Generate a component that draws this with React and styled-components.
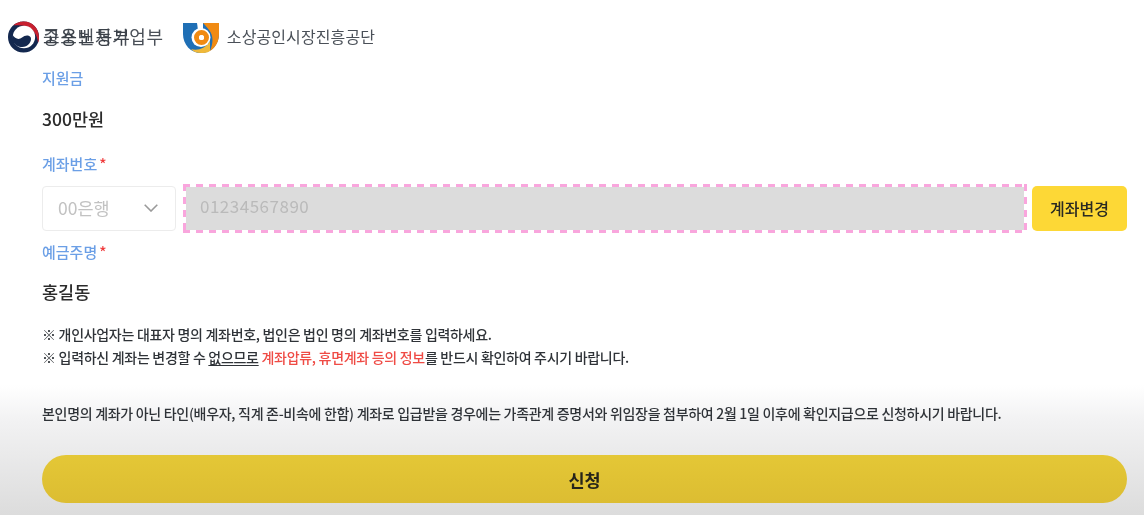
import styled, { createGlobalStyle } from 'styled-components'

const GlobalStyle = createGlobalStyle`
    html, body {
        margin: 0;
        padding: 0;
        background: #fff;
    }
    body {
        font-family: "Noto Sans CJK KR", "Noto Sans", sans-serif;
    }
`

const Page = styled.div`
    width: 1144px;
    height: 515px;
    overflow: hidden;
    box-sizing: border-box;
    background: linear-gradient(to bottom, #fff 0, #fff 385px, #f2f2f3 420px, #dcdcdc 515px);
    filter: blur(0.4px);
`

const Header = styled.header`
    display: flex;
    align-items: center;
    height: 32px;
    padding: 21px 0 0 7px;
`

const Brand = styled.div`
    display: flex;
    align-items: center;
    margin-right: 19px;
`

const BrandName = styled.span`
    position: relative;
    margin-left: ${(p) => p.$gap}px;
    padding-bottom: 2px;
    font-size: ${(p) => p.$size}px;
    letter-spacing: ${(p) => p.$spacing}px;
    color: #4a5058;
    white-space: nowrap;
`

const GhostName = styled.span`
    position: absolute;
    left: 0;
    top: 0;
    letter-spacing: 1px;
    color: #3a4048;
`

const Form = styled.main`
    display: flex;
    flex-direction: column;
    padding: 0 17px 0 42px;
`

const Label = styled.div`
    font-size: 15px;
    line-height: 20px;
    font-weight: 500;
    color: #6b9fe6;
    margin-top: ${(p) => p.$top}px;
`

const Star = styled.span`
    color: #f0393a;
    margin-left: 2px;
`

const Value = styled.div`
    font-size: 17.5px;
    line-height: 24px;
    font-weight: 500;
    color: #2b2b2b;
    margin-top: ${(p) => p.$top}px;
`

const AccountRow = styled.div`
    display: flex;
    align-items: center;
    height: 48px;
    margin-top: 10px;
`

const BankSelect = styled.div`
    display: flex;
    align-items: center;
    justify-content: space-between;
    box-sizing: border-box;
    width: 134px;
    height: 45px;
    padding: 0 17px 0 15px;
    border: 1px solid #ececec;
    border-radius: 4px;
    background: #fff;
    font-size: 17.5px;
    line-height: 24px;
    color: #c2c2c2;
`

const AccountInput = styled.div`
    display: flex;
    align-items: center;
    flex: 1;
    box-sizing: border-box;
    height: 49px;
    margin: 0 5px 0 7px;
    padding: 0 0 5px 17px;
    background:
        linear-gradient(to right, #f9a6dd 54%, transparent 54%) 0 0 / 13px 3px repeat-x,
        linear-gradient(to right, #f9a6dd 54%, transparent 54%) 0 100% / 13px 3px repeat-x,
        linear-gradient(to bottom, #f9a6dd 54%, transparent 54%) 0 0 / 3px 13px repeat-y,
        linear-gradient(to bottom, #f9a6dd 54%, transparent 54%) 100% 0 / 3px 13px repeat-y,
        linear-gradient(#dcdcdc, #dcdcdc) center / calc(100% - 6px) calc(100% - 6px) no-repeat;
    font-size: 17px;
    letter-spacing: 0.5px;
    color: #bababa;
`

const ChangeButton = styled.div`
    display: flex;
    align-items: center;
    justify-content: center;
    width: 95px;
    height: 45px;
    border-radius: 5px;
    background: #fdd836;
    font-size: 16px;
    font-weight: 500;
    color: #2a2a22;
`

const Note = styled.p`
    margin: ${(p) => p.$top}px 0 0;
    font-size: 14px;
    line-height: 23px;
    font-weight: 500;
    letter-spacing: -0.3px;
    color: #2f3338;
    white-space: nowrap;
`

const Warn = styled.span`
    color: #ef4b45;
`

const Underlined = styled.span`
    text-decoration: underline;
    text-underline-offset: 2px;
`

const SubmitButton = styled.div`
    display: flex;
    align-items: center;
    justify-content: center;
    height: 48px;
    margin-top: 30px;
    border-radius: 24px;
    background: linear-gradient(to bottom, #e4c736, #dcbd32);
    font-size: 17.5px;
    font-weight: 700;
    color: #26241a;
`

const TaegeukLogo = () => (
    <svg width="33" height="32" viewBox="0 0 33 33">
        <circle cx="16.5" cy="16.5" r="16" fill="#13284f" />
        <path d="M6 4.500C10 1 14 .5 17 .5C26 .5 32.500 8 32.500 17C32.500 19 32.200 21 31.500 22.500C31 14 25 6 17 5C13 4.500 9 4.500 6 4.500z" fill="#c8202f" />
        <circle cx="17" cy="16.500" r="11.500" fill="#fff" />
        <path d="M5 14C8 19 12 19.500 15 17C18 14.500 22 14 24 17C25 20 23 24 19 26C14 28 8 26 5 20z" fill="#13284f" />
    </svg>
)

const SemasLogo = () => (
    <svg width="36" height="31" viewBox="0 0 36 31">
        <path d="M0 1H36V12C36 23 28 31 18 31C8 31 0 23 0 12z" fill="#1f6fb5" />
        <path d="M20 1H36V12C36 19 33 25 27 29C30 22 31 14 26 8C24 5 22 3 20 1z" fill="#f08a12" />
        <path d="M27 29C24 31 21 31 18 31C14 31 11 30 8 27C14 29 22 27 27 19z" fill="#f0b93a" />
        <circle cx="18" cy="15.500" r="9.500" fill="#fff" />
        <path d="M14 1H20L20 8H15z" fill="#fff" />
        <circle cx="18.5" cy="15.500" r="5" fill="none" stroke="#f08a12" strokeWidth="5" />
        <circle cx="18.5" cy="15.500" r="2.500" fill="#fff" />
    </svg>
)

const Chevron = () => (
    <svg width="14" height="8" viewBox="0 0 14 8" fill="none" stroke="#9a9a9a" strokeWidth="1.6">
        <path d="M.7 .7 7 7l6.300-6.300" />
    </svg>
)

const App = () => {
    return (
        <Page>
            <GlobalStyle />
            <Header>
                <Brand>
                    <TaegeukLogo />
                    <BrandName $gap={3} $size={18} $spacing={0.7}>
                        중소벤처기업부
                        <GhostName>고용노동부</GhostName>
                    </BrandName>
                </Brand>
                <Brand>
                    <SemasLogo />
                    <BrandName $gap={8} $size={16} $spacing={0.1}>소상공인시장진흥공단</BrandName>
                </Brand>
            </Header>
            <Form>
                <Label $top={15}>지원금</Label>
                <Value $top={19}>300만원</Value>
                <Label $top={23}>계좌번호<Star>*</Star></Label>
                <AccountRow>
                    <BankSelect>00은행<Chevron /></BankSelect>
                    <AccountInput>01234567890</AccountInput>
                    <ChangeButton>계좌변경</ChangeButton>
                </AccountRow>
                <Label $top={10}>예금주명<Star>*</Star></Label>
                <Value $top={18}>홍길동</Value>
                <Note $top={19}>※ 개인사업자는 대표자 명의 계좌번호, 법인은 법인 명의 계좌번호를 입력하세요.</Note>
                <Note $top={0}>
                    ※ 입력하신 계좌는 변경할 수 <Underlined>없으므로</Underlined> <Warn>계좌압류, 휴면계좌 등의 정보</Warn>를 반드시 확인하여 주시기 바랍니다.
                </Note>
                <Note $top={33}>본인명의 계좌가 아닌 타인(배우자, 직계 존-비속에 한함) 계좌로 입급받을 경우에는 가족관계 증명서와 위임장을 첨부하여 2월 1일 이후에 확인지급으로 신청하시기 바랍니다.</Note>
                <SubmitButton>신청</SubmitButton>
            </Form>
        </Page>
    )
}

export default App
